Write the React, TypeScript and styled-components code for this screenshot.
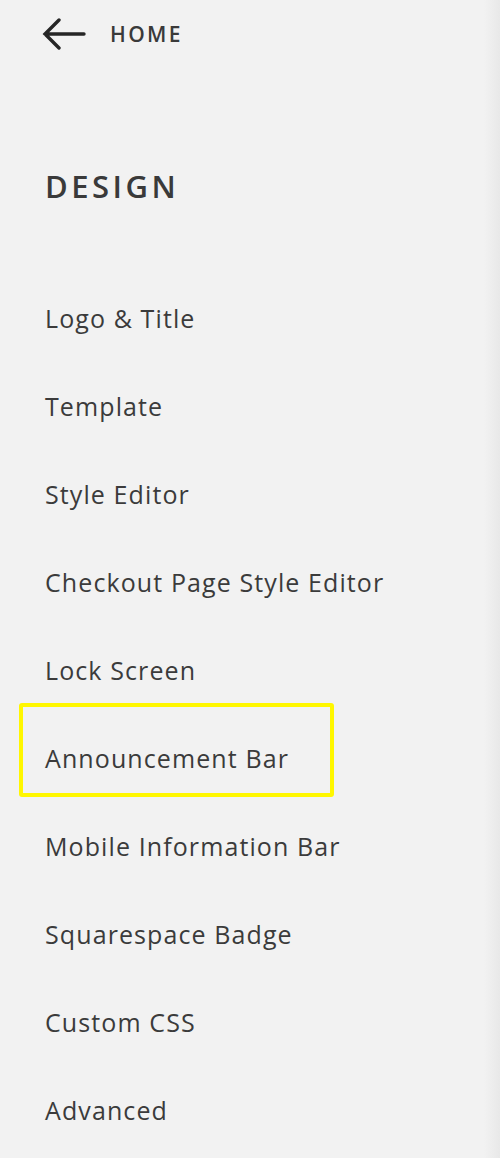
import styled, { createGlobalStyle } from "styled-components";

const GlobalStyle = createGlobalStyle`
  html, body {
    margin: 0;
    padding: 0;
    background: #f2f2f2;
  }
  body {
    font-family: "Open Sans", "Liberation Sans", sans-serif;
    color: #3b3b3b;
  }
`;

const items = [
  "Logo & Title",
  "Template",
  "Style Editor",
  "Checkout Page Style Editor",
  "Lock Screen",
  "Announcement Bar",
  "Mobile Information Bar",
  "Squarespace Badge",
  "Custom CSS",
  "Advanced",
];

function App() {
  return (
    <>
      <GlobalStyle />
      <Panel>
        <Header>
          <BackArrow viewBox="0 0 44 32" aria-hidden>
            <path d="M42 16H3M17 2L3 16l14 14" />
          </BackArrow>
          <HomeLabel>HOME</HomeLabel>
        </Header>
        <Title>DESIGN</Title>
        <Menu>
          {items.map((label) => (
            <Item key={label} $highlight={label === "Announcement Bar"}>
              {label}
            </Item>
          ))}
        </Menu>
      </Panel>
    </>
  );
}

export default App;

const Panel = styled.div`
  width: 500px;
  height: 1158px;
  box-sizing: border-box;
  background: linear-gradient(
    to right,
    #f2f2f2 0,
    #f2f2f2 484px,
    #e8e8e8 500px
  );
  overflow: hidden;
`;

const Header = styled.div`
  display: flex;
  align-items: center;
  height: 68px;
  padding-left: 42px;
`;

const BackArrow = styled.svg`
  width: 44px;
  height: 32px;
  fill: none;
  stroke: #262626;
  stroke-width: 3.4;
  stroke-linecap: round;
  stroke-linejoin: miter;
`;

const HomeLabel = styled.span`
  margin-left: 24px;
  font-size: 21px;
  font-weight: 600;
  letter-spacing: 2.4px;
  color: #3a3a3a;
`;

const Title = styled.h1`
  margin: 0;
  padding: 98px 0 0 45px;
  height: 40px;
  line-height: 40px;
  font-size: 31px;
  font-weight: 600;
  letter-spacing: 3.5px;
  color: #3a3a3a;
`;

const Menu = styled.div`
  display: flex;
  flex-direction: column;
  padding-top: 68px;
`;

const Item = styled.div<{ $highlight?: boolean }>`
  position: relative;
  height: 88px;
  line-height: 88px;
  padding-left: 45px;
  font-size: 25px;
  letter-spacing: 1.1px;
  color: #3b3b3b;

  ${({ $highlight }) =>
    $highlight &&
    `
    &::before {
      content: "";
      position: absolute;
      left: 19px;
      top: -11px;
      width: 315px;
      height: 94px;
      box-sizing: border-box;
      border: 4px solid #fff700;
      border-radius: 3px;
    }
  `}
`;
